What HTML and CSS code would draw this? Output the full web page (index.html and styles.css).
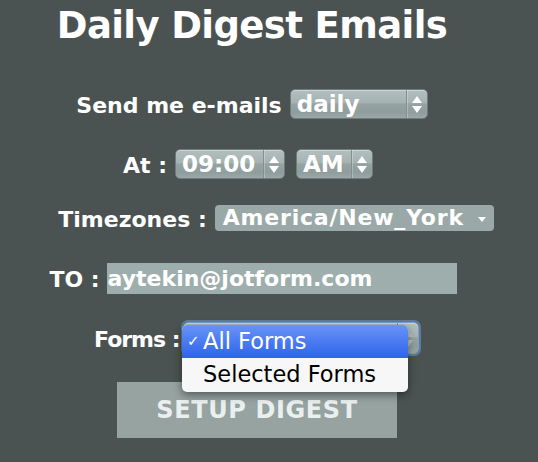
FILE: index.html
```html
<!DOCTYPE html>
<html>
<head>
<meta charset="utf-8">
<link rel="stylesheet" href="styles.css">
</head>
<body>
<div class="page">
  <h1 class="title">Daily Digest Emails</h1>

  <div class="row row-send">
    <span class="label">Send me e-mails</span>
    <span class="aqua sel-daily"><span class="val">daily</span><span class="spin"><i class="up"></i><i class="down"></i></span></span>
  </div>

  <div class="row row-at">
    <span class="label">At :</span>
    <span class="aqua sel-time"><span class="val">09:00</span><span class="spin"><i class="up"></i><i class="down"></i></span></span>
    <span class="aqua sel-ampm"><span class="val">AM</span><span class="spin"><i class="up"></i><i class="down"></i></span></span>
  </div>

  <div class="row row-tz">
    <span class="label">Timezones :</span>
    <span class="flat-select"><span class="val">America/New_York</span><i class="caret"></i></span>
  </div>

  <div class="row row-to">
    <span class="label">TO :</span>
    <span class="text-input">aytekin@jotform.com</span>
  </div>

  <div class="row row-forms">
    <span class="label label-forms">Forms :</span>
    <span class="aqua sel-forms focus"><span class="val"></span><span class="spin"><i class="up"></i><i class="down"></i></span></span>
    <div class="menu">
      <div class="opt selected"><span class="check">✓</span>All Forms</div>
      <div class="opt">Selected Forms</div>
    </div>
  </div>

  <div class="row row-btn">
    <button class="setup">SETUP DIGEST</button>
  </div>
</div>
</body>
</html>
```

FILE: styles.css
```css
html, body {
  margin: 0;
  padding: 0;
  background: #4b5352;
  height: 100%;
}
.page {
  width: 504px;
  font-family: "DejaVu Sans", sans-serif;
  font-weight: bold;
  color: #ffffff;
}
.title {
  margin: 0;
  padding-top: 4px;
  height: 44px;
  line-height: 44px;
  font-size: 37px;
  text-align: center;
  letter-spacing: -0.6px;
}
.row {
  display: flex;
  justify-content: center;
  align-items: center;
  font-size: 22px;
  position: relative;
}
.label {
  white-space: nowrap;
  line-height: 26px;
  padding-top: 3px;
}
.label-forms {
  letter-spacing: -1px;
}
.row-send { margin-top: 41px; height: 30px; }
.row-at { margin-top: 30px; height: 30px; padding-right: 8px; }
.row-tz { margin-top: 26px; height: 26px; padding-left: 48px; }
.row-to { margin-top: 32px; height: 31px; padding-left: 2px; }
.row-forms { margin-top: 28px; height: 32px; justify-content: flex-start; padding-left: 94px; }
.row-btn { margin-top: 28px; padding-left: 10px; }

/* aqua-style select */
.aqua {
  display: flex;
  align-items: stretch;
  height: 30px;
  box-sizing: border-box;
  margin-left: 8px;
  border-radius: 5px;
  border: 1px solid #6f7c7b;
  background: linear-gradient(to bottom, #b2bfbe 0%, #a5b3b2 45%, #95a3a2 50%, #8f9d9c 80%, #9aa8a7 100%);
  box-shadow: inset 0 1px 0 rgba(255,255,255,0.35);
  color: #fff;
  overflow: hidden;
}
.aqua .val {
  flex: 1;
  padding-left: 6px;
  line-height: 28px;
  font-size: 23px;
  white-space: nowrap;
  overflow: hidden;
}
.aqua .spin {
  width: 20px;
  border-left: 1px solid #829090;
  box-shadow: inset 1px 0 0 rgba(255,255,255,0.25);
  display: flex;
  flex-direction: column;
  align-items: center;
  justify-content: center;
  gap: 3px;
}
.up, .down {
  display: block;
  width: 0;
  height: 0;
  border-left: 5px solid transparent;
  border-right: 5px solid transparent;
}
.up { border-bottom: 7px solid #fff; }
.down { border-top: 7px solid #fff; }
.sel-daily { width: 138px; }
.sel-time { width: 110px; }
.sel-ampm { width: 77px; margin-left: 11px; }
.sel-forms { width: 236px; height: 32px; margin-left: 3px; }
.sel-forms.focus {
  border-color: #7d9fc6;
  box-shadow: 0 0 0 2px rgba(110,160,220,0.55), inset 0 1px 0 rgba(255,255,255,0.35);
}
.sel-forms .up { border-bottom-color: #b7c2c1; }
.sel-forms .down { border-top-color: #b7c2c1; }

/* flat select */
.flat-select {
  display: flex;
  align-items: center;
  width: 279px;
  height: 26px;
  box-sizing: border-box;
  margin-left: 8px;
  padding-left: 8px;
  padding-right: 8px;
  border-radius: 4px;
  background: #9aa8a7;
  color: #fff;
}
.flat-select .val {
  flex: 1;
  line-height: 26px;
  white-space: nowrap;
  letter-spacing: 0.8px;
}
.caret {
  display: block;
  width: 0;
  height: 0;
  border-left: 4px solid transparent;
  border-right: 4px solid transparent;
  border-top: 5px solid #fff;
  margin-top: 2px;
}

/* text input */
.text-input {
  display: block;
  width: 350px;
  height: 31px;
  box-sizing: border-box;
  margin-left: 7px;
  padding-left: 1px;
  line-height: 31px;
  background: #9eaead;
  color: #fff;
  white-space: nowrap;
}

/* dropdown menu */
.menu {
  position: absolute;
  left: 182px;
  top: 3px;
  width: 226px;
  background: #f7f7f7;
  border-radius: 5px;
  box-shadow: 0 3px 9px rgba(0,0,0,0.45);
  overflow: hidden;
  font-family: "DejaVu Sans", sans-serif;
  font-weight: normal;
  font-size: 22.5px;
  color: #000;
  z-index: 5;
  padding-bottom: 1px;
}
.opt {
  height: 33px;
  line-height: 33px;
  padding-left: 21px;
  position: relative;
  white-space: nowrap;
}
.opt.selected {
  color: #fff;
  background: linear-gradient(to bottom, #6893f6 0%, #4a7bf1 50%, #2f64ea 100%);
}
.check {
  position: absolute;
  left: 5px;
  top: 0;
  font-size: 15px;
}

/* button */
.setup {
  width: 280px;
  height: 56px;
  border: none;
  background: #96a3a1;
  color: #eaf0f0;
  font-family: "DejaVu Sans", sans-serif;
  font-weight: bold;
  font-size: 24px;
  letter-spacing: 0.6px;
  padding: 0;
  margin: 0;
}
```
